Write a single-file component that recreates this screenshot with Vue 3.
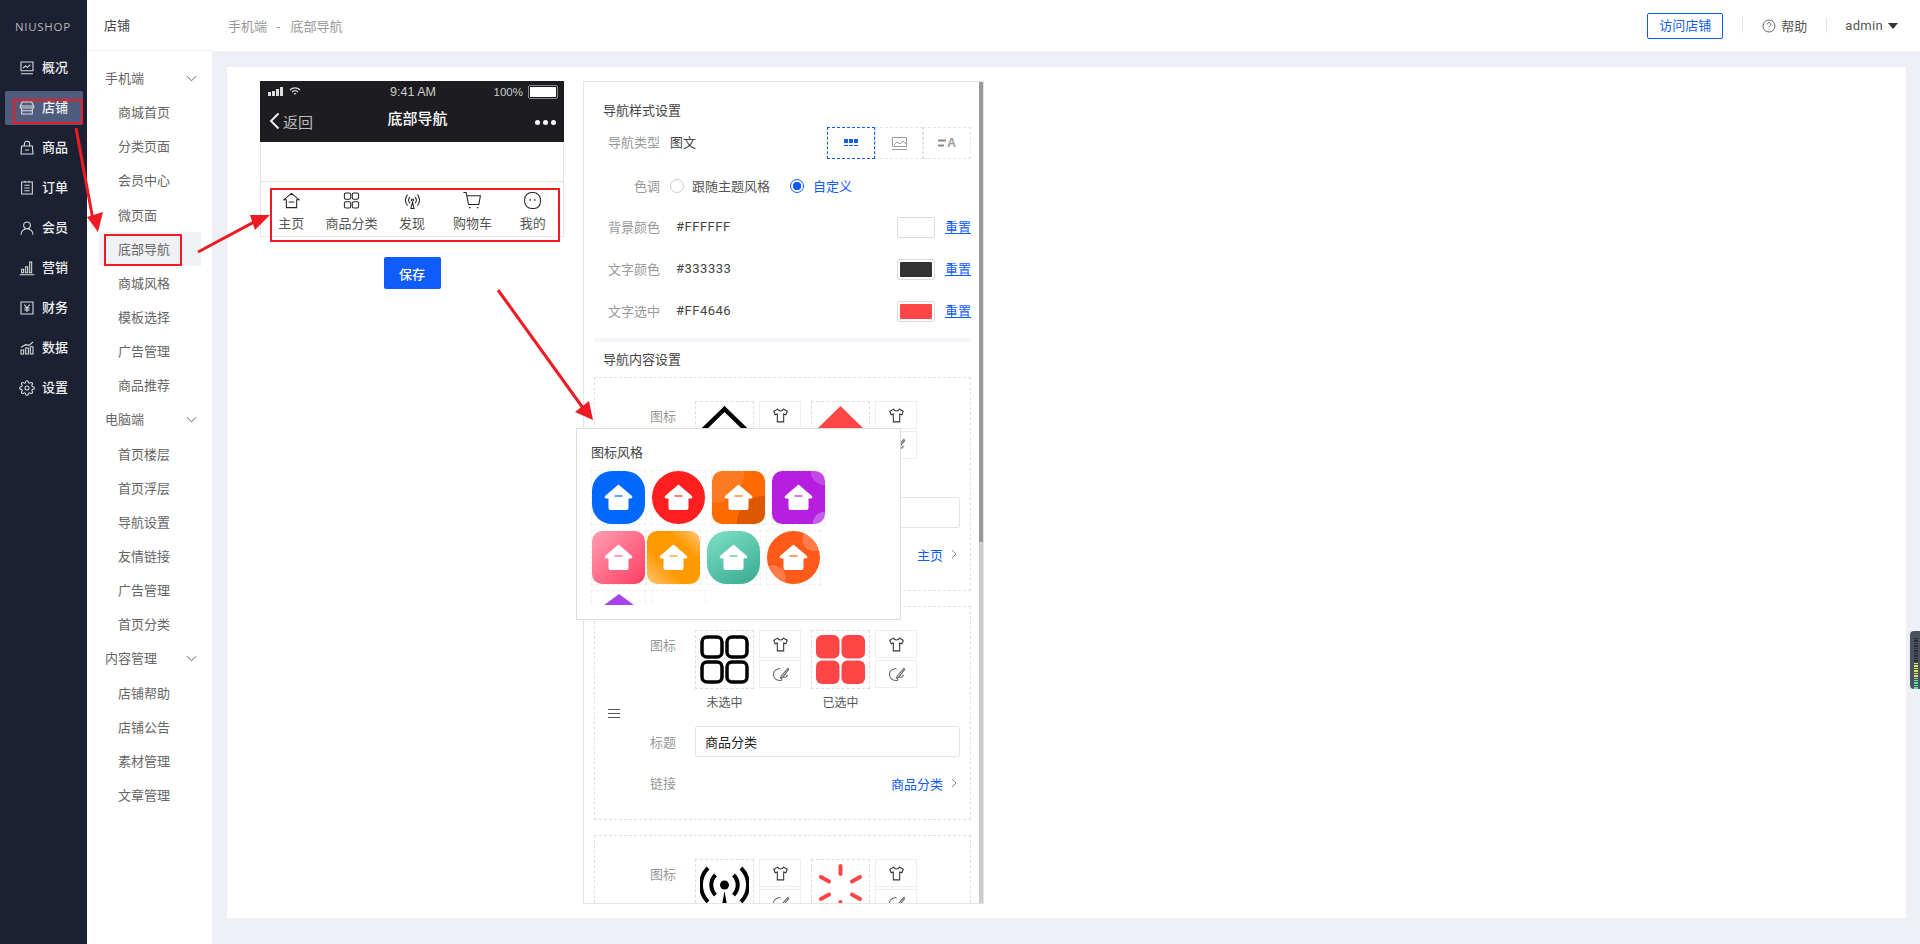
<script setup>
const mainNav = [
  { label: "概况", icon: "M3 3h18v13H3zM3 20.500h18M6 12l4-3 3 2 4-4" },
  { label: "店铺", active: true, icon: "M5 3h14l3 6v3H2V9zM2 9h20M4 12v9h16v-9M4 16h16" },
  { label: "商品", icon: "M4 9h16l1 12H3zM8 9V6a4 4 0 0 1 8 0v3M9 15h6" },
  { label: "订单", icon: "M4 3h16v18H4zM8 8h8M8 12h8M8 16h8M9 1v3M15 1v3" },
  { label: "会员", icon: "M12 3a5 5 0 1 1 0 10a5 5 0 1 1 0-10zM3 22c0-5 4-9 9-9s9 4 9 9" },
  { label: "营销", icon: "M1 22h22M4 19v-5h3v5zM10 19v-9h3v9zM16 19V3h3v16z" },
  { label: "财务", icon: "M3 3h18v18H3zM8 7l4 5 4-5M12 12v6M8 12h8M8 15h8" },
  { label: "数据", icon: "M3 21v-6h4v6zM10 21v-9h4v9zM17 21V10h4v11zM3 11l7-4 5 1 6-5" },
  { label: "设置", icon: "M12 15a3 3 0 1 0 0-6 3 3 0 0 0 0 6zM19.400 15a1.650 1.650 0 0 0 .33 1.820l.06.06a2 2 0 0 1 0 2.830 2 2 0 0 1-2.830 0l-.06-.06a1.650 1.650 0 0 0-1.820-.33 1.650 1.650 0 0 0-1 1.510V21a2 2 0 0 1-2 2 2 2 0 0 1-2-2v-.09A1.650 1.650 0 0 0 9 19.400a1.650 1.650 0 0 0-1.820.33l-.06.06a2 2 0 0 1-2.830 0 2 2 0 0 1 0-2.830l.06-.06a1.650 1.650 0 0 0 .33-1.820 1.650 1.650 0 0 0-1.510-1H3a2 2 0 0 1-2-2 2 2 0 0 1 2-2h.09A1.650 1.650 0 0 0 4.600 9a1.650 1.650 0 0 0-.33-1.820l-.06-.06a2 2 0 0 1 0-2.830 2 2 0 0 1 2.830 0l.06.06a1.650 1.650 0 0 0 1.820.33H9a1.650 1.650 0 0 0 1-1.510V3a2 2 0 0 1 2-2 2 2 0 0 1 2 2v.09a1.650 1.650 0 0 0 1 1.510 1.650 1.650 0 0 0 1.820-.33l.06-.06a2 2 0 0 1 2.830 0 2 2 0 0 1 0 2.830l-.06.06a1.650 1.650 0 0 0-.33 1.820V9a1.650 1.650 0 0 0 1.510 1H21a2 2 0 0 1 2 2 2 2 0 0 1-2 2h-.09a1.650 1.650 0 0 0-1.510 1z" },
];

const subNav = [
  { title: "手机端", items: ["商城首页", "分类页面", "会员中心", "微页面", "底部导航", "商城风格", "模板选择", "广告管理", "商品推荐"] },
  { title: "电脑端", items: ["首页楼层", "首页浮层", "导航设置", "友情链接", "广告管理", "首页分类"] },
  { title: "内容管理", items: ["店铺帮助", "店铺公告", "素材管理", "文章管理"] },
];

const tabs = [
  { label: "主页", icon: "M12 3L2.500 11h3v10h13V11h3zM9 14h6" },
  { label: "商品分类", icon: "M5 2.500h4a2 2 0 0 1 2 2v4a2 2 0 0 1-2 2H5a2 2 0 0 1-2-2v-4a2 2 0 0 1 2-2zM15 2.500h4a2 2 0 0 1 2 2v4a2 2 0 0 1-2 2h-4a2 2 0 0 1-2-2v-4a2 2 0 0 1 2-2zM5 13.500h4a2 2 0 0 1 2 2v4a2 2 0 0 1-2 2H5a2 2 0 0 1-2-2v-4a2 2 0 0 1 2-2zM15 13.500h4a2 2 0 0 1 2 2v4a2 2 0 0 1-2 2h-4a2 2 0 0 1-2-2v-4a2 2 0 0 1 2-2z" },
  { label: "发现", icon: "M12 10a1.500 1.500 0 1 1 0 3a1.500 1.500 0 1 1 0-3zM8.500 8a5.500 5.500 0 0 0 0 7M15.500 8a5.500 5.500 0 0 1 0 7M5.500 5a10 10 0 0 0 0 13M18.500 5a10 10 0 0 1 0 13M12 14l-2 8h4z" },
  { label: "购物车", icon: "M1 2h3l3 15h13l2-11H5M8 21h1M18 21h1" },
  { label: "我的", icon: "M11 2h2a9 9 0 0 1 9 9v3a8 8 0 0 1-8 8h-3a9 9 0 0 1-9-9v-2a9 9 0 0 1 9-9zM9 10.500v1.500M15 10.500v1.500" },
];

const colors = [
  { label: "背景颜色", value: "#FFFFFF", cls: "sw-white" },
  { label: "文字颜色", value: "#333333", cls: "sw-dark" },
  { label: "文字选中", value: "#FF4646", cls: "sw-red" },
];

const items = [
  { title: "主页", link: "主页", kind: "home" },
  { title: "商品分类", link: "商品分类", kind: "grid" },
  { title: "发现", link: "发现", kind: "signal" },
];

const tiles = [
  { name: "blue" }, { name: "red" }, { name: "orange" }, { name: "purple" },
  { name: "pink" }, { name: "amber" }, { name: "teal" }, { name: "flame" },
];

const shirt = "M8 3L2.500 6l2 5 3-1v11h9V10l3 1 2-5L16 3c-1 3.500-7 3.500-8 0z";
const palette = "M12 3.500C6.500 3.500 2 7.200 2 12s4.500 8.500 10 8.500c1.500 0 2.200-1 1.700-2.200-.5-1.300.3-2.300 1.700-2.300H18c2 0 3.500-1.500 3.500-3.500M5.500 12v.5M8 8v.5M12.500 6.500v.5M22.500 3.500L13 14l-1 3 3-1.200L23.500 5z";
</script>

<template>
  <div class="page">
    <aside class="sidebar">
      <div class="logo">NIUSHOP</div>
      <div v-for="item in mainNav" :key="item.label" class="side-row">
        <div class="side-link" :class="{ active: item.active }">
          <svg class="side-icon" viewBox="0 0 24 24"><path :d="item.icon" /></svg>
          <span>{{ item.label }}</span>
        </div>
      </div>
    </aside>

    <nav class="subnav">
      <div class="subnav-top">店铺</div>
      <div class="subnav-list">
        <template v-for="group in subNav" :key="group.title">
          <div class="group-title">
            <span>{{ group.title }}</span>
            <svg class="group-arrow" viewBox="0 0 12 7"><path d="M1 1l5 5 5-5" /></svg>
          </div>
          <div v-for="name in group.items" :key="name" class="sub-item" :class="{ current: name === '底部导航' }">{{ name }}</div>
        </template>
      </div>
    </nav>

    <div class="main">
      <header class="topbar">
        <div class="crumbs"><span>手机端</span><span class="crumb-sep">-</span><span>底部导航</span></div>
        <div class="top-right">
          <button class="visit">访问店铺</button>
          <i class="top-line"></i>
          <svg class="help-icon" viewBox="0 0 14 14">
            <circle cx="7" cy="7" r="6" />
            <path d="M5.200 5.400a1.800 1.800 0 1 1 2.700 1.600c-.6.4-.9.7-.9 1.400M7 10v.8" />
          </svg>
          <span class="help">帮助</span>
          <i class="top-line line-two"></i>
          <span class="admin">admin</span>
          <i class="caret"></i>
        </div>
      </header>

      <div class="content">
        <div class="card">
          <div class="preview">
            <div class="phone">
              <div class="phone-head">
                <div class="status">
                  <div class="status-left">
                    <svg width="16" height="9" viewBox="0 0 16 9"><path d="M0 5h3v4H0zM4 4h3v5H4zM8 2h3v7H8zM12 0h3v9h-3z" fill="#ddd" /></svg>
                    <svg width="12" height="9" viewBox="0 0 12 9"><path d="M1 3a7 7 0 0 1 10 0M3 5a4.500 4.500 0 0 1 6 0M5 7a2 2 0 0 1 2 0" fill="none" stroke="#ddd" stroke-width="1.200" /></svg>
                  </div>
                  <span class="time">9:41 AM</span>
                  <div class="status-right">
                    <span>100%</span>
                    <i class="battery"><b></b></i>
                  </div>
                </div>
                <div class="phone-nav">
                  <div class="back">
                    <svg width="11" height="18" viewBox="0 0 11 18"><path d="M9.500 1.500L2 9l7.500 7.500" fill="none" stroke="#eee" stroke-width="2" /></svg>
                    <span>返回</span>
                  </div>
                  <span class="phone-title">底部导航</span>
                  <div class="dots"><i></i><i></i><i></i></div>
                </div>
              </div>
              <div class="phone-body"></div>
              <div class="tabbar">
                <div v-for="tab in tabs" :key="tab.label" class="tab">
                  <svg class="tab-icon" viewBox="0 0 24 24"><path :d="tab.icon" /></svg>
                  <span>{{ tab.label }}</span>
                </div>
              </div>
            </div>
            <button class="save">保存</button>
          </div>

          <div class="panel">
            <i class="scroll-track"><b></b></i>
            <div class="section-title first">导航样式设置</div>

            <div class="type-row">
              <span class="style-label">导航类型</span>
              <span class="type-value">图文</span>
              <div class="type-btns">
                <div class="type-btn selected">
                  <svg width="14" height="8" viewBox="0 0 14 8"><path d="M0 0h4v4H0zM5 0h4v4H5zM10 0h4v4h-4zM0 6h4v1H0zM5 6h4v1H5zM10 6h4v1h-4z" fill="#105cfb" /></svg>
                </div>
                <div class="type-btn">
                  <svg width="15" height="13" viewBox="0 0 15 13"><path d="M.5.5h14v9H.5zM0 12.500h15M2 8l3-3 3 2 3-3 3 3" fill="none" stroke="#999" /></svg>
                </div>
                <div class="type-btn">
                  <svg width="8" height="8" viewBox="0 0 8 8"><path d="M0 .5h8v2H0zM0 5.500h6v2H0z" fill="#888" /></svg>
                  <span class="type-a">A</span>
                </div>
              </div>
            </div>

            <div class="tone-row">
              <span class="style-label">色调</span>
              <span class="radio"></span>
              <span class="radio-text">跟随主题风格</span>
              <span class="radio on"></span>
              <span class="radio-text blue">自定义</span>
            </div>

            <div v-for="color in colors" :key="color.label" class="color-row">
              <span class="style-label">{{ color.label }}</span>
              <span class="color-value">{{ color.value }}</span>
              <span class="swatch"><i :class="color.cls"></i></span>
              <a class="reset">重置</a>
            </div>

            <div class="divider"></div>
            <div class="section-title second">导航内容设置</div>

            <div v-for="item in items" :key="item.title" class="nav-item">
              <svg class="handle" viewBox="0 0 12 9"><path d="M0 .5h12M0 4.500h12M0 8.500h12" /></svg>
              <div class="fields">
                <div class="field">
                  <span class="field-label">图标</span>
                  <div v-for="state in ['未选中', '已选中']" :key="state" class="icon-set">
                    <div class="icon-col">
                      <div class="big-icon" :class="state === '已选中' ? 'picked' : 'plain'">
                        <svg v-if="item.kind === 'home'" viewBox="0 0 49 49">
                          <path v-if="state === '未选中'" d="M24.500 3L1.500 25.500V47h46V25.500zM17 33h15" fill="none" stroke="#000" stroke-width="4.500" />
                          <path v-else d="M24.500 0L0 24v25h49V24z" fill="#ff4646" />
                        </svg>
                        <svg v-else-if="item.kind === 'grid' && state === '未选中'" viewBox="0 0 49 49">
                          <rect x="2" y="2" width="20" height="20" rx="5" fill="none" stroke="#000" stroke-width="3.500" />
                          <rect x="27" y="2" width="20" height="20" rx="5" fill="none" stroke="#000" stroke-width="3.500" />
                          <rect x="2" y="27" width="20" height="20" rx="5" fill="none" stroke="#000" stroke-width="3.500" />
                          <rect x="27" y="27" width="20" height="20" rx="5" fill="none" stroke="#000" stroke-width="3.500" />
                        </svg>
                        <svg v-else-if="item.kind === 'grid'" viewBox="0 0 49 49">
                          <rect x="0" y="0" width="23.500" height="23.500" rx="6" fill="#ff4646" />
                          <rect x="25.500" y="0" width="23.500" height="23.500" rx="6" fill="#ff4646" />
                          <rect x="0" y="25.500" width="23.500" height="23.500" rx="6" fill="#ff4646" />
                          <rect x="25.500" y="25.500" width="23.500" height="23.500" rx="6" fill="#ff4646" />
                        </svg>
                        <svg v-else-if="state === '未选中'" viewBox="0 0 49 49">
                          <circle cx="24.500" cy="21" r="4.500" fill="#000" />
                          <path d="M15.500 11a14 14 0 0 0 0 20M33.500 11a14 14 0 0 1 0 20M8 4a24 24 0 0 0 0 34M41 4a24 24 0 0 1 0 34" fill="none" stroke="#000" stroke-width="4" />
                          <path d="M24.500 27l-4 22h8z" fill="#000" />
                        </svg>
                        <svg v-else viewBox="0 0 49 49">
                          <path d="M24.500 2v8M5 13l8 4.500M44 13l-8 4.500M5 35l8-4.500M44 35l-8-4.500M24.500 38v1" fill="none" stroke="#ff4646" stroke-width="4" stroke-linecap="round" />
                        </svg>
                      </div>
                      <span class="caption">{{ state }}</span>
                    </div>
                    <div class="tools">
                      <div class="tool"><svg class="shirt" viewBox="0 0 24 24"><path :d="shirt" /></svg></div>
                      <div class="tool"><svg class="palette" viewBox="0 0 24 24"><path :d="palette" /></svg></div>
                    </div>
                  </div>
                </div>
                <div class="field title-field">
                  <span class="field-label">标题</span>
                  <input class="title-input" :value="item.title" readonly>
                </div>
                <div class="field link-field">
                  <span class="field-label">链接</span>
                  <span class="link-text">{{ item.link }}</span>
                  <svg class="link-arrow" viewBox="0 0 6 10"><path d="M1 1l4 4-4 4" /></svg>
                </div>
              </div>
            </div>
          </div>
        </div>
      </div>
    </div>

    <div class="icon-popup">
      <div class="popup-title">图标风格</div>
      <div class="tile-grid">
        <div v-for="tile in tiles" :key="tile.name" class="tile-cell">
          <div class="tile" :class="'tile-' + tile.name">
            <svg class="house" viewBox="0 -1 53 53">
              <path class="roof" d="M26.500 12.500L40 24q1 2.500-1.500 2.500H36.500V36q0 2-2 2h-16q-2 0-2-2V26.500h-2q-2.500 0-1.500-2.500z" />
              <path class="dash" d="M22.500 24h8" />
            </svg>
          </div>
        </div>
        <div class="tile-cell">
          <svg class="last-house" viewBox="0 0 53 53"><path d="M27 3L8 17v36h38V17z" /></svg>
        </div>
        <div class="tile-cell"></div>
      </div>
    </div>

    <svg class="marks" viewBox="0 0 1920 944">
      <rect x="14" y="100" width="68" height="23" />
      <rect x="105" y="235" width="76" height="30" />
      <rect x="271" y="189" width="288" height="52" />
      <path d="M76 128L93 220M198 252L258 220M498 290L583 408" />
      <polygon points="87,217 103,212 98,232" />
      <polygon points="250,215 270,215 255,230" />
      <polygon points="575,412 589,401 593,420" />
    </svg>

    <div class="float-widget">
      <i v-for="n in 10" :key="'d' + n" class="meter off"></i>
      <i v-for="n in 6" :key="'y' + n" class="meter warm"></i>
      <i v-for="n in 5" :key="'g' + n" class="meter cool"></i>
    </div>
  </div>
</template>

<style>
html, body {
  margin: 0;
  padding: 0;
  overflow: hidden;
}
</style>

<style scoped>
.page {
  position: relative;
  display: flex;
  width: 1920px;
  height: 944px;
  overflow: hidden;
  background: #eef0f5;
  font-family: "Noto Sans CJK SC", "Noto Sans", sans-serif;
  font-size: 13px;
  color: #444;
}

/* dark menu */
.sidebar {
  width: 87px;
  flex: none;
  background: #1b2133;
}
.logo {
  height: 48px;
  padding: 17px 0 0 15px;
  box-sizing: border-box;
  font-family: "Open Sans", sans-serif;
  font-size: 11.500px;
  line-height: 20px;
  letter-spacing: 0.700px;
  color: #b5b5b5;
}
.side-row {
  height: 40px;
  padding: 3px 4px 3px 5px;
  box-sizing: border-box;
}
.side-link {
  display: flex;
  align-items: center;
  height: 34px;
  padding-left: 14px;
  gap: 7px;
  border-radius: 2px;
  color: #eee;
  font-size: 13px;
  font-weight: 500;
}
.side-link span {
  margin-bottom: 3px;
}
.side-link.active {
  background: #505c7d;
}
.side-icon {
  width: 16px;
  height: 16px;
  fill: none;
  stroke: #ddd;
  stroke-width: 1.600;
}

/* second menu */
.subnav {
  width: 125px;
  flex: none;
  background: #fff;
}
.subnav-top {
  height: 51px;
  padding-left: 17px;
  line-height: 50px;
  box-sizing: border-box;
  border-bottom: 1px solid #eef0f5;
}
.subnav-list {
  padding-top: 10px;
  color: #666;
}
.group-title {
  display: flex;
  align-items: center;
  justify-content: space-between;
  height: 34.150px;
  padding: 0 15px 0 18px;
}
.group-title span {
  margin-bottom: 2px;
}
.group-arrow {
  width: 11px;
  height: 7px;
  fill: none;
  stroke: #555;
}
.sub-item {
  height: 34.150px;
  margin: 0 11px 0 12px;
  padding-left: 19px;
  line-height: 33px;
}
.sub-item.current {
  background: #f0f1f5;
}

/* top bar */
.main {
  flex: 1;
  display: flex;
  flex-direction: column;
  min-width: 0;
}
.topbar {
  display: flex;
  align-items: center;
  justify-content: space-between;
  height: 51px;
  flex: none;
  padding: 0 22px 0 16px;
  background: #fff;
}
.crumbs {
  display: flex;
  color: #999;
}
.crumb-sep {
  margin: 0 10px 0 9px;
}
.top-right {
  display: flex;
  align-items: center;
}
.visit {
  width: 76px;
  height: 26px;
  padding: 0 0 2px;
  border: 1px solid #105cfb;
  border-radius: 2px;
  background: #fff;
  color: #105cfb;
  font: inherit;
}
.top-line {
  width: 1px;
  height: 15px;
  margin: 0 19px;
  background: #e5e5e5;
}
.line-two {
  margin: 0 18px 0 19px;
}
.help-icon {
  width: 14px;
  height: 14px;
  fill: none;
  stroke: #666;
}
.help {
  margin-left: 5px;
  color: #555;
}
.admin {
  font-family: "Roboto", sans-serif;
  font-size: 13px;
  letter-spacing: 0.300px;
  color: #555;
}
.caret {
  width: 0;
  height: 0;
  margin-left: 5px;
  border: 5.500px solid transparent;
  border-top: 6px solid #333;
  border-bottom: 0;
}

/* content */
.content {
  flex: 1;
  padding: 16px 14px 26px 15px;
  min-height: 0;
}
.card {
  display: flex;
  height: 100%;
  padding: 14px 0 0 33px;
  box-sizing: border-box;
  background: #fff;
}
.preview {
  width: 304px;
  display: flex;
  flex-direction: column;
  align-items: center;
}
.phone {
  width: 100%;
}
.phone-head {
  height: 61px;
  background: #1d1c21;
  color: #ccc;
}
.status {
  display: grid;
  grid-template-columns: 1fr auto 1fr;
  align-items: center;
  height: 21px;
  padding: 0 6px 0 8px;
  font-family: "Liberation Sans", sans-serif;
  font-size: 12.500px;
}
.status-left {
  display: flex;
  align-items: center;
  gap: 5px;
}
.status-right {
  display: flex;
  align-items: center;
  justify-content: flex-end;
  gap: 5px;
  font-size: 11.500px;
}
.battery {
  display: block;
  width: 26px;
  height: 10px;
  padding: 1px;
  border: 1px solid #888;
  border-radius: 2px;
}
.battery b {
  display: block;
  width: 100%;
  height: 100%;
  background: #fff;
}
.phone-nav {
  display: grid;
  grid-template-columns: 1fr auto 1fr;
  align-items: center;
  height: 40px;
  padding: 0 8px 0 9px;
}
.back {
  display: flex;
  align-items: center;
  gap: 3px;
  margin-bottom: 2px;
  font-size: 15px;
  color: #bbb;
}
.phone-title {
  margin: 0 0 10px 10px;
  font-size: 15px;
  font-weight: 500;
  color: #fff;
}
.dots {
  display: flex;
  justify-content: flex-end;
  gap: 3px;
}
.dots i {
  width: 5px;
  height: 5px;
  border-radius: 50%;
  background: #fff;
}
.phone-body {
  height: 39px;
  border: solid #e5e5e5;
  border-width: 0 1px;
}
.tabbar {
  display: flex;
  height: 56px;
  box-sizing: border-box;
  padding: 9px 0 0;
  border: 1px solid #e5e5e5;
}
.tab {
  flex: 1;
  display: flex;
  flex-direction: column;
  align-items: center;
  gap: 3px;
  line-height: 20px;
  color: #555;
}
.tab-icon {
  width: 19px;
  height: 19px;
  fill: none;
  stroke: #222;
  stroke-width: 1.300;
  stroke-linecap: round;
}
.save {
  width: 57px;
  height: 32px;
  margin-top: 20px;
  padding: 0;
  border: 0;
  border-radius: 2px;
  background: #105cfb;
  color: #fff;
  font: inherit;
  font-weight: 500;
}

/* settings panel */
.panel {
  position: relative;
  width: 401px;
  height: 823px;
  margin-left: 19px;
  padding: 0 12px 0 10px;
  box-sizing: border-box;
  overflow: hidden;
  border: 1px solid #e5e5e5;
}
.scroll-track {
  position: absolute;
  top: 0;
  right: 0;
  bottom: 0;
  width: 4px;
  background: #ccc;
}
.scroll-track b {
  display: block;
  height: 460px;
  background: #999;
}
.section-title {
  height: 20px;
  padding-left: 9px;
  line-height: 20px;
  color: #444;
}
.first {
  margin-top: 18px;
}
.second {
  margin-top: 7px;
  margin-bottom: 8px;
}
.style-label {
  width: 53px;
  margin-left: 13px;
  padding-bottom: 2px;
  flex: none;
  text-align: right;
  color: #999;
}
.type-row {
  display: flex;
  align-items: center;
  height: 32px;
  margin-top: 7px;
}
.type-row .style-label,
.type-value {
  padding-bottom: 4px;
}
.type-value {
  margin-left: 10px;
}
.type-btns {
  display: flex;
  margin-left: auto;
}
.type-btn {
  display: flex;
  align-items: center;
  justify-content: center;
  width: 48px;
  height: 32px;
  box-sizing: border-box;
  border: 1px dashed #e5e5e5;
}
.type-btn.selected {
  border-color: #105cfb;
}
.type-a {
  margin-left: 1px;
  font-family: "Liberation Sans", sans-serif;
  font-size: 12px;
  line-height: 12px;
  font-weight: 700;
  color: #999;
}
.tone-row {
  display: flex;
  align-items: center;
  height: 20px;
  margin-top: 17px;
}
.radio {
  width: 14px;
  height: 14px;
  margin-left: 10px;
  flex: none;
  box-sizing: border-box;
  border: 1px solid #ccc;
  border-radius: 50%;
}
.radio.on {
  margin-left: 20px;
  border-color: #105cfb;
  background: radial-gradient(circle, #105cfb 0 4px, #fff 4.500px);
}
.radio-text {
  margin-left: 8px;
  padding-bottom: 2px;
  color: #555;
}
.radio-text.blue {
  margin-left: 9px;
  color: #105cfb;
}
.color-row {
  display: flex;
  align-items: center;
  height: 22px;
  margin-top: 20px;
}
.color-value {
  margin-left: 16px;
  padding-bottom: 1px;
  font-family: "Roboto", sans-serif;
  font-size: 13px;
  letter-spacing: 0.500px;
}
.swatch {
  width: 38px;
  height: 21px;
  margin-left: auto;
  padding: 2px;
  box-sizing: border-box;
  border: 1px solid #ddd;
  border-radius: 2px;
}
.swatch i {
  display: block;
  height: 100%;
  border-radius: 1px;
}
.sw-white {
  background: #fff;
}
.sw-dark {
  background: #333;
}
.sw-red {
  background: #ff4646;
}
.reset {
  margin-left: 10px;
  padding-bottom: 2px;
  color: #105cfb;
  text-decoration: underline;
}
.divider {
  height: 4px;
  margin-top: 16px;
  background: #f5f6f9;
}

.nav-item {
  display: flex;
  align-items: center;
  height: 214px;
  margin-bottom: 15px;
  box-sizing: border-box;
  border: 1px dashed #e0e0e0;
}
.handle {
  width: 12px;
  height: 9px;
  margin-left: 13px;
  flex: none;
  fill: none;
  stroke: #555;
}
.fields {
  width: 340px;
  margin-bottom: 3px;
}
.field {
  display: flex;
}
.field-label {
  width: 56px;
  margin-right: 19px;
  flex: none;
  text-align: right;
  line-height: 30px;
  color: #999;
}
.icon-set {
  display: flex;
  margin-right: 10px;
}
.icon-col {
  display: flex;
  flex-direction: column;
  align-items: center;
  width: 59px;
}
.big-icon {
  display: flex;
  align-items: center;
  justify-content: center;
  width: 59px;
  height: 59px;
  box-sizing: border-box;
  border: 1px dashed #ddd;
}
.big-icon svg {
  width: 49px;
  height: 49px;
}
.caption {
  margin-top: 3px;
  line-height: 20px;
  font-size: 12px;
  color: #555;
}
.tools {
  margin-left: 5px;
}
.tool {
  display: flex;
  align-items: center;
  justify-content: center;
  width: 42px;
  height: 28px;
  margin-bottom: 2px;
  box-sizing: border-box;
  border: 1px solid #eee;
}
.shirt,
.palette {
  width: 17px;
  height: 17px;
  fill: none;
  stroke: #333;
  stroke-width: 1.500;
}
.palette {
  stroke: #666;
}
.title-field {
  margin-top: 14px;
}
.title-field .field-label {
  line-height: 31px;
}
.title-input {
  width: 265px;
  height: 31px;
  padding: 0 9px;
  box-sizing: border-box;
  border: 1px solid #e5e5e5;
  border-radius: 2px;
  font: inherit;
  color: #222;
  outline: none;
}
.link-field {
  align-items: center;
  height: 20px;
  margin-top: 16px;
}
.link-field .field-label {
  line-height: 18px;
}
.link-text {
  margin-left: auto;
  color: #105cfb;
}
.link-arrow {
  width: 6px;
  height: 10px;
  margin: 0 3px 0 8px;
  fill: none;
  stroke: #888;
}

/* icon style popup */
.icon-popup {
  position: absolute;
  left: 576px;
  top: 428px;
  width: 325px;
  height: 192px;
  padding: 13px 0 0 14px;
  box-sizing: border-box;
  border: 1px solid #ddd;
  background: #fff;
}
.popup-title {
  line-height: 20px;
  color: #444;
}
.tile-grid {
  display: flex;
  flex-wrap: wrap;
  width: 245px;
  height: 135px;
  margin-top: 8px;
  overflow: hidden;
  row-gap: 5px;
  align-content: flex-start;
}
.tile-cell {
  width: 55px;
  height: 55px;
  margin-right: 5px;
  box-sizing: border-box;
  border: 1px dashed #eee;
}
.tile-grid .tile-cell:nth-child(5) {
  margin-right: 0;
}
.tile {
  width: 53px;
  height: 53px;
}
.house {
  display: block;
  width: 53px;
  height: 53px;
}
.roof {
  fill: #fff;
}
.dash {
  fill: none;
  stroke-width: 1.200;
}
.last-house {
  display: block;
  width: 53px;
  height: 53px;
  fill: #a744f0;
}
.tile-blue {
  border-radius: 20px;
  background: #0068ff;
}
.tile-blue .dash {
  stroke: #0068ff;
}
.tile-red {
  border-radius: 50%;
  background: #ff1f1f;
}
.tile-red .dash {
  stroke: #ff1f1f;
}
.tile-orange {
  border-radius: 10px;
  background:
    radial-gradient(circle at 100% 100%, #dc5700 0 28px, transparent 28.500px),
    radial-gradient(circle at 0 0, #fb7a22 0 32px, transparent 32.500px),
    #ff6a00;
}
.tile-orange .dash {
  stroke: #ff6a00;
}
.tile-purple {
  border-radius: 10px;
  background:
    radial-gradient(circle at 100% 100%, #c55ee6 0 12px, transparent 12.500px),
    radial-gradient(circle at 100% 0, #c249e4 0 14px, transparent 14.500px),
    #b61fdf;
}
.tile-purple .dash {
  stroke: #b61fdf;
}
.tile-pink {
  border-radius: 10px;
  background: linear-gradient(135deg, #ff9fb0, #ff3d62);
}
.tile-pink .dash {
  stroke: #ff5c7c;
}
.tile-amber {
  border-radius: 10px;
  background: linear-gradient(45deg, #ffc577 0%, #ff9a00 35%, #ff9a00 70%, #ffc880 100%);
}
.tile-amber .dash {
  stroke: #ff9a00;
}
.tile-teal {
  border-radius: 20px;
  background: linear-gradient(150deg, #7fe0c5, #38aa90);
}
.tile-teal .dash {
  stroke: #4dbb9f;
}
.tile-flame {
  border-radius: 50%;
  background:
    radial-gradient(circle at 90% 15%, #ff7c4a 0 12px, transparent 12.500px),
    radial-gradient(circle at 12% 88%, #ff7c4a 0 12px, transparent 12.500px),
    #ff5a1a;
}
.tile-flame .dash {
  stroke: #ff5a1a;
}

/* red notes drawn over the screenshot */
.marks {
  position: absolute;
  left: 0;
  top: 0;
  width: 1920px;
  height: 944px;
  pointer-events: none;
}
.marks rect {
  fill: none;
  stroke: #ed1c24;
  stroke-width: 2;
}
.marks path {
  fill: none;
  stroke: #ed1c24;
  stroke-width: 3;
}
.marks polygon {
  fill: #ed1c24;
}

.float-widget {
  position: absolute;
  right: 0;
  top: 631px;
  display: flex;
  flex-direction: column;
  gap: 1px;
  width: 10px;
  height: 58px;
  padding: 7px 0 0 4px;
  box-sizing: border-box;
  border-radius: 4px 0 0 4px;
  background: #4c5160;
}
.meter {
  display: block;
  height: 1.500px;
  width: 4px;
}
.off {
  background: #2b2e38;
}
.warm {
  background: #d8e65a;
}
.cool {
  background: #5fe3a8;
}
</style>
